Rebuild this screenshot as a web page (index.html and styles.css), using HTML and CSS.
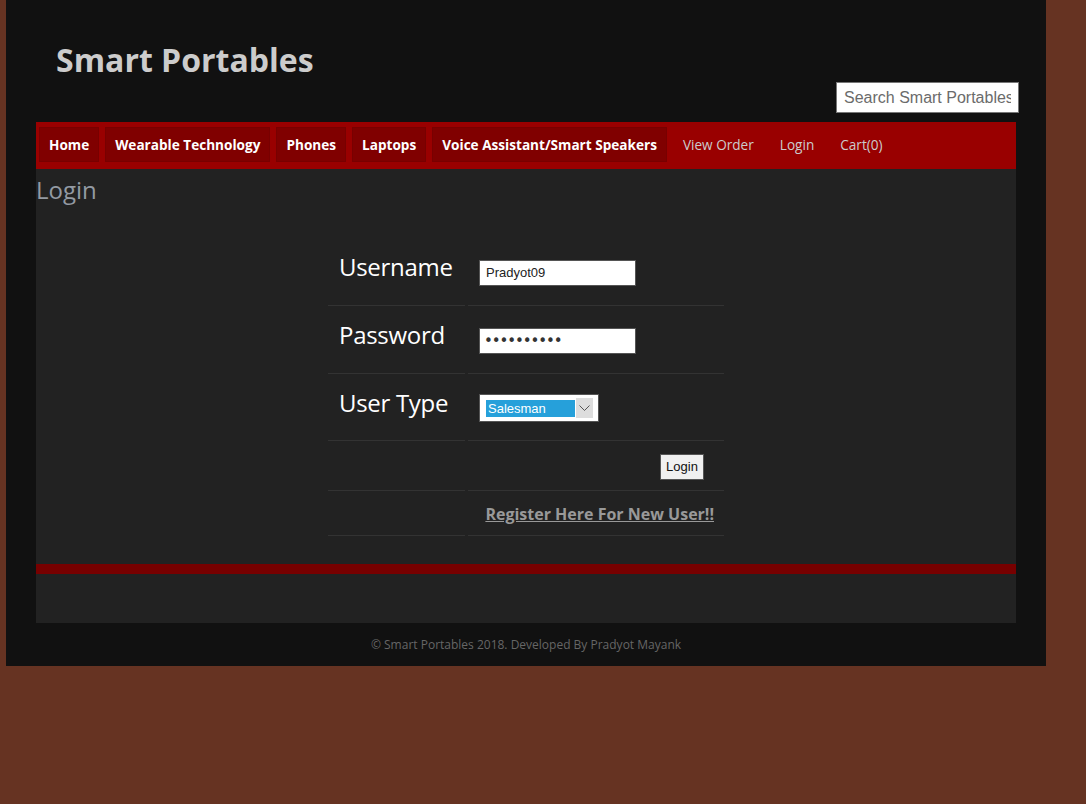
FILE: index.html
```html
<!DOCTYPE html>
<html>
<head>
<meta charset="utf-8">
<title>Smart Portables - Login</title>
<link rel="stylesheet" href="styles.css">
</head>
<body>
<div class="page">
  <header class="header">
    <h1 class="title">Smart Portables</h1>
    <div class="search-row">
      <input class="search" type="text" placeholder="Search Smart Portables">
    </div>
  </header>
  <nav class="nav">
    <a class="nav-box" href="#">Home</a>
    <a class="nav-box" href="#">Wearable Technology</a>
    <a class="nav-box" href="#">Phones</a>
    <a class="nav-box" href="#">Laptops</a>
    <a class="nav-box" href="#">Voice Assistant/Smart Speakers</a>
    <a class="nav-link" href="#">View Order</a>
    <a class="nav-link" href="#">Login</a>
    <a class="nav-link" href="#">Cart(0)</a>
  </nav>
  <main class="content">
    <h2 class="heading">Login</h2>
    <table class="login-table">
      <tr class="r1">
        <td class="label">Username</td>
        <td class="value"><input class="field" type="text" value="Pradyot09"></td>
      </tr>
      <tr class="r2">
        <td class="label">Password</td>
        <td class="value"><input class="field pw" type="password" value="pradyot123"></td>
      </tr>
      <tr class="r3">
        <td class="label">User Type</td>
        <td class="value">
          <div class="fake-select">
            <span class="opt">Salesman</span>
            <span class="arrow"><svg width="11" height="7" viewBox="0 0 11 7"><path d="M0.5 0.5 L5.5 5.5 L10.5 0.5" fill="none" stroke="#555" stroke-width="1"/></svg></span>
          </div>
        </td>
      </tr>
      <tr class="r4">
        <td class="label"></td>
        <td class="value right"><button class="btn" type="button">Login</button></td>
      </tr>
      <tr class="r5">
        <td class="label"></td>
        <td class="value right reg-cell"><a class="register" href="#">Register Here For New User!!</a></td>
      </tr>
    </table>
    <div class="red-bar"></div>
    <div class="spacer"></div>
  </main>
  <footer class="footer">© Smart Portables 2018. Developed By Pradyot Mayank</footer>
</div>
</body>
</html>
```

FILE: styles.css
```css
html, body {
  margin: 0;
  padding: 0;
}
body {
  background: #663322;
  font-family: "Open Sans", "Liberation Sans", sans-serif;
  min-height: 804px;
}
.page {
  width: 1040px;
  margin-left: 6px;
  background: #111111;
}
.header {
  height: 122px;
  box-sizing: border-box;
  padding: 0 28px 0 50px;
  display: flex;
  flex-direction: column;
}
.title {
  margin: 0;
  padding-top: 40px;
  font-size: 32px;
  line-height: 40px;
  font-weight: 700;
  color: #cccccc;
}
.search-row {
  display: flex;
  justify-content: flex-end;
  margin-top: 2px;
  margin-right: -1px;
}
.search {
  width: 183px;
  height: 31px;
  box-sizing: border-box;
  border: 1px solid #777;
  background: #fff;
  padding: 0 7px;
  font-family: "Liberation Sans", Arial, sans-serif;
  font-size: 16px;
  color: #555;
  outline: none;
}
.search::placeholder {
  color: #6b6b6b;
}
.nav {
  margin: 0 30px;
  height: 47px;
  box-sizing: border-box;
  background: #990000;
  padding: 5px 3px 7px;
  display: flex;
  gap: 6px;
}
.nav a {
  text-decoration: none;
  font-size: 13.6px;
  line-height: 35px;
  padding: 0 10px;
}
.nav-box {
  background: #800000;
  color: #ffffff;
  font-weight: 700;
  box-shadow: inset 0 0 0 1px #780000;
}
.nav-link {
  color: #cccccc;
}
.content {
  margin: 0 30px;
  background: #222222;
  overflow: hidden;
}
.heading {
  margin: 4px 0 0;
  font-size: 24px;
  line-height: 33px;
  font-weight: 400;
  color: #939aa3;
}
.login-table {
  margin: 32px auto 0;
  border-collapse: separate;
  border-spacing: 3px 0;
  width: 402px;
}
.login-table td {
  border-bottom: 1px solid #333333;
  padding: 0;
  vertical-align: middle;
}
.label {
  width: 126px;
  padding-left: 11px !important;
  font-size: 24px;
  color: #ffffff;
  letter-spacing: -0.3px;
}
.value {
  padding-left: 11px !important;
}
.value.right {
  text-align: right;
  padding-right: 10px !important;
}
.r1 { height: 68px; }
.r2 { height: 68px; }
.r3 { height: 67px; }
.r4 { height: 50px; }
.r5 { height: 45px; }
.r1 .label, .r2 .label, .r3 .label { padding-bottom: 10px !important; }
.r1 .value, .r2 .value, .r3 .value { padding-top: 2px !important; }
.reg-cell { padding-top: 1px !important; }
.field {
  width: 157px;
  height: 26px;
  box-sizing: border-box;
  border: 1px solid #555;
  background: #fff;
  padding: 0 6px;
  font-family: "Liberation Sans", Arial, sans-serif;
  font-size: 13px;
  color: #222;
  display: block;
}
.field.pw {
  font-family: "DejaVu Sans", sans-serif;
  font-size: 15px;
  letter-spacing: -1.1px;
  color: #333;
  padding-left: 4px;
}
.fake-select {
  width: 120px;
  height: 28px;
  box-sizing: border-box;
  border: 1px solid #555;
  background: #fff;
  display: flex;
  align-items: center;
  padding: 0 5px 0 6px;
  gap: 1px;
}
.opt {
  background: #26a0da;
  color: #fff;
  font-family: "Liberation Sans", Arial, sans-serif;
  font-size: 13px;
  line-height: 17px;
  width: 90px;
  padding-left: 2px;
  box-sizing: border-box;
}
.arrow {
  width: 17px;
  height: 20px;
  background: #dddddd;
  display: flex;
  align-items: center;
  justify-content: center;
}
.btn {
  width: 44px;
  height: 26px;
  background: #f0f0f0;
  border: 1px solid #555;
  padding: 0;
  font-family: "Liberation Sans", Arial, sans-serif;
  font-size: 13px;
  color: #111;
  margin-right: 10px;
  margin-top: 2px;
}
.register {
  font-size: 16px;
  font-weight: 700;
  color: #999999;
  text-decoration: underline;
}
.red-bar {
  margin-top: 28px;
  height: 10px;
  background: #770000;
}
.spacer {
  height: 49px;
}
.footer {
  text-align: center;
  font-size: 12px;
  line-height: 17px;
  color: #666666;
  padding: 13px 0 13px;
}
```
